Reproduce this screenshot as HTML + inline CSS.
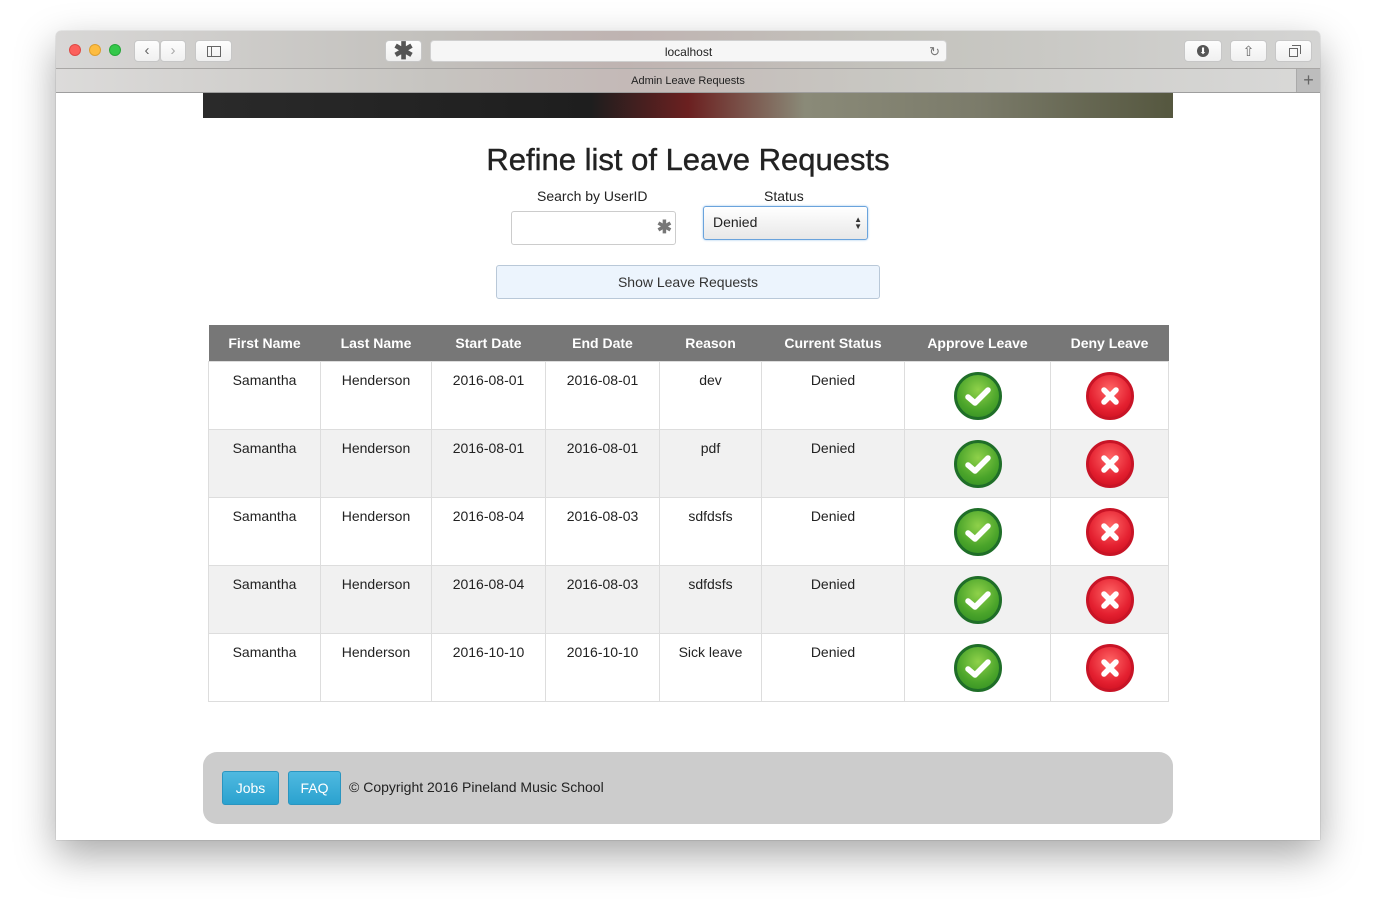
<!DOCTYPE html>
<html><head><meta charset="utf-8"><style>
*{box-sizing:border-box;margin:0;padding:0}
body{width:1376px;height:920px;background:#fff;font-family:"Liberation Sans",Arial,sans-serif;position:relative;overflow:hidden}
.win{position:absolute;left:56px;top:31px;width:1264px;height:809px;background:#fff;border-radius:5px 5px 0 0;box-shadow:0 15px 40px rgba(0,0,0,.35),0 0 1px rgba(0,0,0,.4);overflow:hidden}
.tb{position:absolute;left:0;top:0;width:100%;height:38px;background:linear-gradient(90deg,#d8d7d6 0%,#c2c0bc 30%,#bfb3b1 45%,#c3c2bc 65%,#d4d4d3 100%);border-bottom:1px solid #a9a7a5}
.tabbar{position:absolute;left:0;top:38px;width:100%;height:24px;background:linear-gradient(90deg,#dcdbda 0%,#c6c4c0 30%,#c4b9b7 45%,#c8c7c2 65%,#d9d9d8 100%);border-bottom:1px solid #9e9e9e;font-size:11px;text-align:center;line-height:25px;color:#222}
.dot{position:absolute;top:13px;width:12px;height:12px;border-radius:50%}
.btn{position:absolute;top:9px;height:22px;background:linear-gradient(#fdfdfd,#f0f0f0);border:1px solid #c7c7c7;border-radius:4px}
.url{position:absolute;left:374px;top:9px;width:517px;height:22px;background:#f6f6f6;border:1px solid #cfcfcf;border-radius:4px;font-size:12px;text-align:center;line-height:22px;color:#222}
.banner{position:absolute;left:147px;top:62px;width:970px;height:25px;background:linear-gradient(90deg,#2a2a2a 0%,#1e1e1e 40%,#6b2020 50%,#8a8a78 62%,#7b7b6a 80%,#55573f 100%)}
h1{position:absolute;left:0;width:100%;top:111px;text-align:center;font-size:31px;font-weight:normal;color:#222;-webkit-text-stroke:.4px #222}
.lbl{position:absolute;font-size:14px;color:#222}
table{position:absolute;left:152px;top:294px;border-collapse:collapse;font-size:14px;color:#222}
th{background:#777;color:#fff;height:36px;font-weight:bold;font-size:14px;text-align:center}
td{height:68px;border:1px solid #ddd;text-align:center;vertical-align:top;padding-top:10px}
tr:nth-child(odd) td{background:#f1f1f1}
td.ic{padding-top:10px}
.ok,.no{display:inline-block;width:48px;height:48px;border-radius:50%;position:relative}
.ok{background:radial-gradient(circle at 50% 35%,#8fd14a,#4aa42a 60%,#2e8a22);border:3px solid #1f6e28}
.no{background:radial-gradient(circle at 50% 35%,#f66,#e42030 60%,#c40a1a);border:3px solid #c81426}
.ok svg,.no svg{position:absolute;left:0;top:0}
.foot{position:absolute;left:147px;top:721px;width:970px;height:72px;background:#ccc;border-radius:14px}
.fb{position:absolute;top:19px;height:34px;background:linear-gradient(#4fb9e0,#2ba2cf);border:1px solid #2a95c0;border-radius:3px;color:#fff;font-size:14px;text-align:center;line-height:32px}
</style></head><body>
<div class="win">
 <div class="tb">
  <div class="dot" style="left:13px;background:#fc605c;border:1px solid #de4a45"></div>
  <div class="dot" style="left:33px;background:#fdbc40;border:1px solid #de9f2f"></div>
  <div class="dot" style="left:53px;background:#34c84a;border:1px solid #27a73a"></div>
  <div class="btn" style="left:78px;width:26px;font-size:15px;text-align:center;line-height:19px;color:#666">‹</div>
  <div class="btn" style="left:104px;width:26px;font-size:15px;text-align:center;line-height:19px;color:#aaa">›</div>
  <div class="btn" style="left:139px;width:37px"><div style="position:absolute;left:11px;top:5px;width:14px;height:11px;border:1px solid #666"></div><div style="position:absolute;left:15px;top:5px;width:1px;height:11px;background:#666"></div></div>
  <div class="btn" style="left:329px;width:37px;text-align:center;font-size:24px;line-height:22px;color:#555;font-weight:bold">✱</div>
  <div class="url">localhost<span style="position:absolute;right:6px;top:0;color:#777;font-size:13px">↻</span></div>
  <div class="btn" style="left:1128px;width:38px"><div style="position:absolute;left:12px;top:4px;width:12px;height:12px;border-radius:50%;background:#555;color:#fff;font-size:9px;line-height:12px;text-align:center">⬇</div></div>
  <div class="btn" style="left:1174px;width:37px;text-align:center;color:#666;font-size:14px;line-height:20px">⇧</div>
  <div class="btn" style="left:1219px;width:37px"><div style="position:absolute;left:13px;top:7px;width:9px;height:9px;border:1px solid #666;background:#f8f8f8"></div><div style="position:absolute;left:16px;top:4px;width:9px;height:9px;border-top:1px solid #666;border-right:1px solid #666"></div></div>
 </div>
 <div class="tabbar">Admin Leave Requests<div style="position:absolute;right:0;top:0;width:24px;height:23px;background:#bdbdbd;border-left:1px solid #aaa;color:#666;font-size:18px;line-height:22px">+</div></div>
 <div class="banner"></div>
 <h1>Refine list of Leave Requests</h1>
 <div class="lbl" style="left:481px;top:157px">Search by UserID</div>
 <div class="lbl" style="left:708px;top:157px">Status</div>
 <div style="position:absolute;left:455px;top:180px;width:165px;height:34px;border:1px solid #ccc;border-radius:3px;background:#fff"><span style="position:absolute;right:3px;top:5px;color:#777;font-size:18px;font-weight:bold">✱</span></div>
 <div style="position:absolute;left:647px;top:175px;width:165px;height:34px;border:1px solid #6aa3dc;border-radius:3px;background:linear-gradient(#fff,#e8e8e8);box-shadow:0 0 2px #9cc4ec;font-size:14px;color:#222;line-height:31px;padding-left:9px">Denied<span style="position:absolute;right:5px;top:0;font-size:8px;line-height:7px;padding-top:9px;color:#333">▲<br>▼</span></div>
 <div style="position:absolute;left:440px;top:234px;width:384px;height:34px;border:1px solid #b9c8d8;border-radius:3px;background:#ecf4fd;text-align:center;line-height:32px;font-size:14px;color:#333">Show Leave Requests</div>
 <table>
  <tr><th style="width:112px">First Name</th><th style="width:111px">Last Name</th><th style="width:114px">Start Date</th><th style="width:114px">End Date</th><th style="width:102px">Reason</th><th style="width:143px">Current Status</th><th style="width:146px">Approve Leave</th><th style="width:118px">Deny Leave</th></tr>
  <tr><td>Samantha</td><td>Henderson</td><td>2016-08-01</td><td>2016-08-01</td><td>dev</td><td>Denied</td><td class="ic"><span class="ok"><svg width="42" height="42"><path d="M11 22 L18 28 L31 15" fill="none" stroke="#fff" stroke-width="5.5" stroke-linecap="round" stroke-linejoin="round"/></svg></span></td><td class="ic"><span class="no"><svg width="42" height="42"><path d="M15 15 L27 27 M27 15 L15 27" stroke="#fff" stroke-width="5.5" stroke-linecap="round"/></svg></span></td></tr>
  <tr><td>Samantha</td><td>Henderson</td><td>2016-08-01</td><td>2016-08-01</td><td>pdf</td><td>Denied</td><td class="ic"><span class="ok"><svg width="42" height="42"><path d="M11 22 L18 28 L31 15" fill="none" stroke="#fff" stroke-width="5.5" stroke-linecap="round" stroke-linejoin="round"/></svg></span></td><td class="ic"><span class="no"><svg width="42" height="42"><path d="M15 15 L27 27 M27 15 L15 27" stroke="#fff" stroke-width="5.5" stroke-linecap="round"/></svg></span></td></tr>
  <tr><td>Samantha</td><td>Henderson</td><td>2016-08-04</td><td>2016-08-03</td><td>sdfdsfs</td><td>Denied</td><td class="ic"><span class="ok"><svg width="42" height="42"><path d="M11 22 L18 28 L31 15" fill="none" stroke="#fff" stroke-width="5.5" stroke-linecap="round" stroke-linejoin="round"/></svg></span></td><td class="ic"><span class="no"><svg width="42" height="42"><path d="M15 15 L27 27 M27 15 L15 27" stroke="#fff" stroke-width="5.5" stroke-linecap="round"/></svg></span></td></tr>
  <tr><td>Samantha</td><td>Henderson</td><td>2016-08-04</td><td>2016-08-03</td><td>sdfdsfs</td><td>Denied</td><td class="ic"><span class="ok"><svg width="42" height="42"><path d="M11 22 L18 28 L31 15" fill="none" stroke="#fff" stroke-width="5.5" stroke-linecap="round" stroke-linejoin="round"/></svg></span></td><td class="ic"><span class="no"><svg width="42" height="42"><path d="M15 15 L27 27 M27 15 L15 27" stroke="#fff" stroke-width="5.5" stroke-linecap="round"/></svg></span></td></tr>
  <tr><td>Samantha</td><td>Henderson</td><td>2016-10-10</td><td>2016-10-10</td><td>Sick leave</td><td>Denied</td><td class="ic"><span class="ok"><svg width="42" height="42"><path d="M11 22 L18 28 L31 15" fill="none" stroke="#fff" stroke-width="5.5" stroke-linecap="round" stroke-linejoin="round"/></svg></span></td><td class="ic"><span class="no"><svg width="42" height="42"><path d="M15 15 L27 27 M27 15 L15 27" stroke="#fff" stroke-width="5.5" stroke-linecap="round"/></svg></span></td></tr>
 </table>
 <div class="foot">
  <div class="fb" style="left:19px;width:57px">Jobs</div>
  <div class="fb" style="left:85px;width:53px">FAQ</div>
  <div style="position:absolute;left:146px;top:27px;font-size:14px;color:#222">© Copyright 2016 Pineland Music School</div>
 </div>
</div>
</body></html>
